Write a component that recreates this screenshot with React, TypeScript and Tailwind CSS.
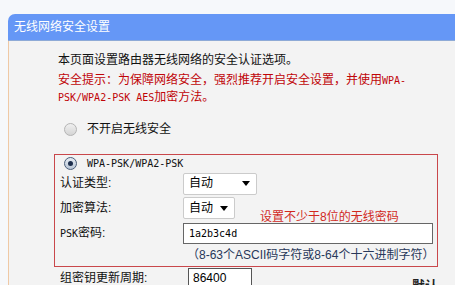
import React from 'react';

const cjk = "font-['Liberation_Sans','Noto_Sans_CJK_SC',sans-serif]";
const mono = "font-['DejaVu_Sans_Mono','Noto_Sans_CJK_SC',monospace] text-[10px]";

// little radio button like the old router pages
const Radio = ({checked}: {checked?: boolean}) => (
    <span className={
        checked
            ? 'w-[13px] h-[13px] rounded-full border border-[#4a5e7a] bg-gradient-to-b from-[#e6ecf3] to-[#b9c6d6] flex items-center justify-center'
            : 'w-[13px] h-[13px] rounded-full border border-[#b4b4b4] bg-gradient-to-b from-[#f0f0f0] to-[#d4d4d4]'
    }>
        {checked && <span className="w-[5px] h-[5px] rounded-full bg-[#1d2f4d]"></span>}
    </span>
);

const Select = ({width}: {width: string}) => (
    <div className={`${width} h-[22px] bg-white border border-[#cbcbcb] rounded-[2px] flex items-center justify-between pl-[5px] pr-[6px]`}>
        <span className="text-[12px] text-black">自动</span>
        <span className="w-0 h-0 border-l-[4px] border-r-[4px] border-t-[5px] border-l-transparent border-r-transparent border-t-black"></span>
    </div>
);

const App = () => {
    return (
        <div className={`w-[455px] h-[285px] overflow-hidden bg-[#f6f8fb] pt-[14px] relative ${cjk}`}>
            <div className="ml-[8px]">
                <div className="h-[27px] rounded-tl-[7px] bg-[#6597f6] border-b border-[#8eaad6] flex items-center pl-[6px] text-white text-[12px]">
                    无线网络安全设置
                </div>
                <div className="border-l border-[#efc9a6] bg-[#f3f3f3] h-[260px] pt-[11px] text-[12px] leading-[17px]">
                    <p className="ml-[49px] text-[#111]">本页面设置路由器无线网络的安全认证选项。</p>
                    <p className="ml-[49px] mt-[3px] text-[#c00408]">
                        安全提示：为保障网络安全，强烈推荐开启安全设置，并使用<span className={mono}>WPA-</span><br/>
                        <span className={mono}>PSK/WPA2-PSK AES</span>加密方法。
                    </p>

                    <div className="ml-[55px] mt-[13px] h-[20px] flex items-center gap-[10px] text-[#111]">
                        <Radio/>
                        <span>不开启无线安全</span>
                    </div>

                    <div className="relative ml-[45px] mt-[15px] w-[384px] h-[113px] border border-[#c9474b] text-[#111]">
                        <div className="ml-[9px] h-[17px] flex items-center gap-[10px]">
                            <Radio checked/>
                            <span className={mono}>WPA-PSK/WPA2-PSK</span>
                        </div>
                        <div className="flex items-center h-[23px]">
                            <span className="w-[128px] pl-[5px]">认证类型:</span>
                            <Select width="w-[74px]"/>
                        </div>
                        <div className="flex items-center h-[22px] mt-[2px]">
                            <span className="w-[128px] pl-[5px]">加密算法:</span>
                            <Select width="w-[52px]"/>
                        </div>
                        <div className="flex items-center h-[22px] mt-[3px]">
                            <span className="w-[128px] pl-[5px]"><span className={mono}>PSK</span>密码:</span>
                            <div className="w-[250px] h-[21px] bg-white border border-[#666] flex items-center pl-[5px]">
                                <span className={`${mono} text-black`}>1a2b3c4d</span>
                            </div>
                        </div>
                        <div className="ml-[132px] mt-[3px] h-[17px] text-[#28385a]">
                            （8-63个ASCII码字符或8-64个十六进制字符）
                        </div>
                        <span className="absolute left-[205px] top-[54px] text-[#d12a1e] text-[12px]">设置不少于8位的无线密码</span>
                    </div>

                    <div className="flex items-center ml-[51px] mt-[1px] h-[20px] text-[#111]">
                        <span className="w-[128px]">组密钥更新周期:</span>
                        <div className="w-[64px] h-[20px] bg-white border border-[#555] flex items-center pl-[4px] text-black">86400</div>
                    </div>
                </div>
            </div>
            <span className="absolute left-[412px] top-[276px] text-[13px] font-bold text-[#222]">默认</span>
        </div>
    );
};

export default App;
